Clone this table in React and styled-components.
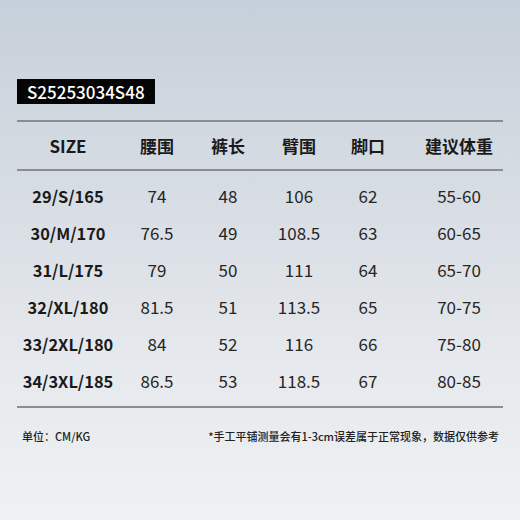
import React from 'react'
import styled, { createGlobalStyle } from 'styled-components'

const GlobalStyle = createGlobalStyle`
  html, body {
    margin: 0;
    padding: 0;
  }
  body {
    font-family: "Noto Sans CJK SC", "Noto Sans", sans-serif;
  }
`

const Page = styled.div`
  width: 520px;
  height: 520px;
  box-sizing: border-box;
  padding: 79px 17px 0 17px;
  background: linear-gradient(180deg, #c6d0da 0%, #d6dce3 35%, #e6e9ed 70%, #eff1f3 100%);
  color: #222;
  overflow: hidden;
`

const Code = styled.div`
  display: inline-flex;
  align-items: center;
  height: 25px;
  padding: 0 10px;
  background: #050505;
  color: #fff;
  font-size: 17px;
  font-weight: 500;
`

const Table = styled.div`
  margin-top: 16px;
  border-top: 2px solid #8b8d90;
  border-bottom: 2px solid #8b8d90;
`

const Row = styled.div`
  display: grid;
  grid-template-columns: 102px 76px 66px 76px 62px 1fr;
  align-items: center;
  height: ${p => p.$h}px;
`

const Head = styled(Row)`
  border-bottom: 2px solid #8b8d90;
`

const Body = styled.div`
  padding: 6px 0 7px;
`

const Cell = styled.div`
  text-align: center;
  font-size: ${p => (p.$size ? 16.4 : 17)}px;
  font-weight: ${p => (p.$bold ? 700 : 400)};
  padding-left: ${p => (p.$last ? 18 : 0)}px;
  padding-right: ${p => (p.$last ? 2 : 0)}px;
  color: ${p => (p.$bold ? '#1a1a1a' : '#262626')};
  white-space: nowrap;
`

const Footer = styled.div`
  display: flex;
  justify-content: space-between;
  padding: 20px 4px 0 5px;
  font-size: 11px;
  font-weight: 500;
  color: #222;
`

const headers = ['SIZE', '腰围', '裤长', '臂围', '脚口', '建议体重']

const rows = [
  ['29/S/165', '74', '48', '106', '62', '55-60'],
  ['30/M/170', '76.5', '49', '108.5', '63', '60-65'],
  ['31/L/175', '79', '50', '111', '64', '65-70'],
  ['32/XL/180', '81.5', '51', '113.5', '65', '70-75'],
  ['33/2XL/180', '84', '52', '116', '66', '75-80'],
  ['34/3XL/185', '86.5', '53', '118.5', '67', '80-85'],
]

export default function App() {
  return (
    <Page>
      <GlobalStyle />
      <Code>S25253034S48</Code>
      <Table>
        <Head $h={47}>
          {headers.map((h, i) => (
            <Cell key={h} $bold $last={i === 5}>{h}</Cell>
          ))}
        </Head>
        <Body>
          {rows.map(r => (
            <Row key={r[0]} $h={37}>
              {r.map((v, i) => (
                <Cell key={i} $bold={i === 0} $size={i === 0} $last={i === 5}>{v}</Cell>
              ))}
            </Row>
          ))}
        </Body>
      </Table>
      <Footer>
        <span>单位：CM/KG</span>
        <span>*手工平铺测量会有1-3cm误差属于正常现象，数据仅供参考</span>
      </Footer>
    </Page>
  )
}
